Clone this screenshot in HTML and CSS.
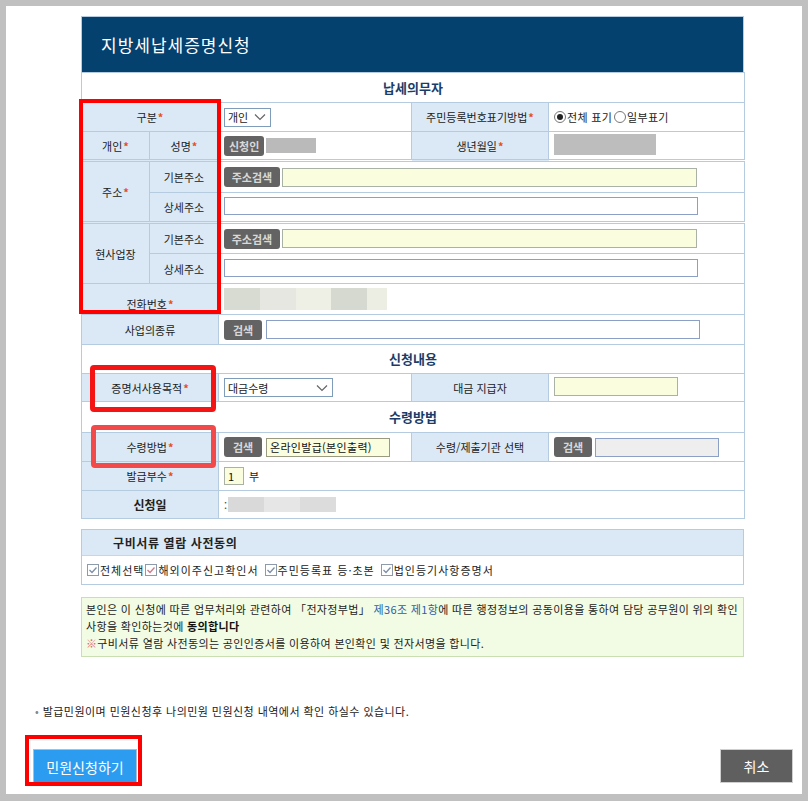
FILE: index.html
```html
<!DOCTYPE html>
<html lang="ko">
<head>
<meta charset="utf-8">
<title>지방세납세증명신청</title>
<link rel="stylesheet" href="styles.css">
</head>
<body>
<div class="page">
  <div class="sheet">
    <div class="content">
      <div class="title-bar">지방세납세증명신청</div>
      <table class="form">
        <colgroup><col class="c1"><col class="c2"><col class="c3"><col class="c4"><col class="c5"></colgroup>
        <tr class="sec h30"><th colspan="5">납세의무자</th></tr>
        <tr class="h29">
          <th colspan="2">구분<span class="req">*</span></th>
          <td><span class="select sel-small">개인<svg class="chev" width="12" height="8" viewBox="0 0 12 8"><path d="M1 1.5l5 5 5-5" fill="none" stroke="#666" stroke-width="1.2"/></svg></span></td>
          <th>주민등록번호표기방법<span class="req">*</span></th>
          <td><span class="radios"><span class="radio on"></span>전체 표기<span class="radio second"></span>일부표기</span></td>
        </tr>
        <tr class="h29">
          <th>개인<span class="req">*</span></th>
          <th>성명<span class="req">*</span></th>
          <td><span class="inline"><span class="btn">신청인</span><span class="blur b-name"></span></span></td>
          <th>생년월일<span class="req">*</span></th>
          <td><span class="blur b-birth"></span></td>
        </tr>
        <tr class="h32 dbl">
          <th rowspan="2">주소<span class="req">*</span></th>
          <th>기본주소</th>
          <td colspan="3"><span class="inline"><span class="btn btn-addr">주소검색</span><span class="input yellow w-addr"></span></span></td>
        </tr>
        <tr class="h30">
          <th>상세주소</th>
          <td colspan="3"><span class="input w-detail"></span></td>
        </tr>
        <tr class="h31 dbl">
          <th rowspan="2">현사업장</th>
          <th>기본주소</th>
          <td colspan="3"><span class="inline"><span class="btn btn-addr">주소검색</span><span class="input yellow w-addr"></span></span></td>
        </tr>
        <tr class="h30">
          <th>상세주소</th>
          <td colspan="3"><span class="input w-detail"></span></td>
        </tr>
        <tr class="h31">
          <th colspan="2" class="low">전화번호<span class="req">*</span></th>
          <td colspan="3"><span class="phone"><span class="p1"></span><span class="p2"></span><span class="p3"></span><span class="p4"></span><span class="p5"></span></span></td>
        </tr>
        <tr class="h30">
          <th colspan="2">사업의종류</th>
          <td colspan="3"><span class="inline gap4"><span class="btn btn-s">검색</span><span class="input w-biz"></span></span></td>
        </tr>
        <tr class="sec h29"><th colspan="5">신청내용</th></tr>
        <tr class="h28">
          <th colspan="2">증명서사용목적<span class="req">*</span></th>
          <td><span class="select sel-wide">대금수령<svg class="chev" width="12" height="8" viewBox="0 0 12 8"><path d="M1 1.5l5 5 5-5" fill="none" stroke="#666" stroke-width="1.2"/></svg></span></td>
          <th>대금 지급자</th>
          <td><span class="input yellow w-124"></span></td>
        </tr>
        <tr class="sec h31"><th colspan="5">수령방법</th></tr>
        <tr class="h29">
          <th colspan="2">수령방법<span class="req">*</span></th>
          <td><span class="inline gap4"><span class="btn btn-s">검색</span><span class="input yellow dark w-124 txt">온라인발급(본인출력)</span></span></td>
          <th>수령/제출기관 선택</th>
          <td><span class="inline gap3"><span class="btn btn-s">검색</span><span class="input grey w-124"></span></span></td>
        </tr>
        <tr class="h29">
          <th colspan="2">발급부수<span class="req">*</span></th>
          <td colspan="3"><span class="inline gap5"><span class="input yellow w-count txt">1</span>부</span></td>
        </tr>
        <tr class="h28">
          <th colspan="2" class="strong">신청일</th>
          <td colspan="3"><span class="date">:<span class="d1"></span><span class="d2"></span><span class="d3"></span></span></td>
        </tr>
      </table>

      <div class="docs">
        <div class="docs-head">구비서류 열람 사전동의</div>
        <div class="docs-body">
          <span class="check"><svg width="12" height="12" viewBox="0 0 12 12"><rect x="0.5" y="0.5" width="11" height="11" fill="#fff" stroke="#8d9aab"/><path d="M2.5 6l2.5 2.5 4.5-5" fill="none" stroke="#7d8fa6" stroke-width="1.3"/></svg>전체선택</span>
          <span class="check"><svg width="12" height="12" viewBox="0 0 12 12"><rect x="0.5" y="0.5" width="11" height="11" fill="#fff" stroke="#8d9aab"/><path d="M2.5 6l2.5 2.5 4.5-5" fill="none" stroke="#d27a86" stroke-width="1.3"/></svg>해외이주신고확인서</span>
          <span class="check"><svg width="12" height="12" viewBox="0 0 12 12"><rect x="0.5" y="0.5" width="11" height="11" fill="#fff" stroke="#8d9aab"/><path d="M2.5 6l2.5 2.5 4.5-5" fill="none" stroke="#7d8fa6" stroke-width="1.3"/></svg>주민등록표 등·초본</span>
          <span class="check"><svg width="12" height="12" viewBox="0 0 12 12"><rect x="0.5" y="0.5" width="11" height="11" fill="#fff" stroke="#8d9aab"/><path d="M2.5 6l2.5 2.5 4.5-5" fill="none" stroke="#7d8fa6" stroke-width="1.3"/></svg>법인등기사항증명서</span>
        </div>
      </div>

      <div class="notice">
        본인은 이 신청에 따른 업무처리와 관련하여 「전자정부법」 <span class="law">제36조 제1항</span>에 따른 행정정보의 공동이용을 통하여 담당 공무원이 위의 확인<br>
        사항을 확인하는것에 <b>동의합니다</b><br>
        <span class="ref">※</span>구비서류 열람 사전동의는 공인인증서를 이용하여 본인확인 및 전자서명을 합니다.
      </div>
    </div>

    <p class="note"><span class="dot">•</span> 발급민원이며 민원신청후 나의민원 민원신청 내역에서 확인 하실수 있습니다.</p>

    <div class="actions">
      <button class="btn-submit" type="button">민원신청하기</button>
      <button class="btn-cancel" type="button">취소</button>
    </div>
  </div>

  <div class="mark mark1"></div>
  <div class="mark mark2"></div>
  <div class="mark mark3"></div>
  <div class="mark mark4"></div>
</div>
</body>
</html>
```

FILE: styles.css
```css
* { box-sizing: border-box; }
html, body { margin: 0; padding: 0; }
body {
  background: #c0c0c0;
  font-family: "Noto Sans CJK KR", "Noto Sans", sans-serif;
  font-size: 11px;
  color: #222;
}
.page {
  position: relative;
  width: 808px;
  height: 801px;
  padding: 6px 6px 7px;
}
.sheet {
  background: #fff;
  height: 788px;
  padding: 10px 0 0 75px;
  display: flex;
  flex-direction: column;
}
.content { width: 663px; }

.title-bar {
  height: 56px;
  background: #05416f;
  border: 1px solid #b5cbe0;
  border-bottom: 0;
  color: #fff;
  font-size: 17px;
  letter-spacing: 1px;
  padding-left: 19px;
  display: flex;
  align-items: center;
}

.form {
  width: 663px;
  border-collapse: collapse;
  table-layout: fixed;
}
.form .c1 { width: 68px; }
.form .c2 { width: 69px; }
.form .c3 { width: 193px; }
.form .c4 { width: 137px; }
.form .c5 { width: 196px; }
.form th, .form td {
  border: 1px solid #b5cbe0;
  padding: 0 0 0 5px;
  line-height: 14px;
  vertical-align: middle;
}
.form th {
  background: #dbe9f6;
  font-weight: normal;
  text-align: center;
  padding: 0;
  color: #222;
}
.form th.strong { font-weight: bold; font-size: 12px; }
.form th.low { vertical-align: bottom; padding-bottom: 3px; }
.form .sec th {
  background: #fff;
  color: #1b3c69;
  font-weight: bold;
  font-size: 13px;
}
.form tr.dbl > * { border-top: 3px double #b5cbe0; }
.h28 { height: 28px; }
.h29 { height: 29px; }
.h30 { height: 30px; }
.h31 { height: 31px; }
.h32 { height: 32px; }

.req { color: #e4501c; font-weight: bold; margin-left: 1px; }

.inline { display: flex; align-items: center; gap: 2px; }
.inline.gap3 { gap: 3px; }
.inline.gap4 { gap: 4px; }
.inline.gap5 { gap: 5px; }

.btn {
  display: inline-flex;
  align-items: center;
  justify-content: center;
  height: 20px;
  padding: 0 5px;
  background: #636363;
  color: #d8d8d8;
  border-radius: 3px;
  font-weight: bold;
  font-size: 11px;
}
.btn-addr { width: 56px; padding: 0; }
.btn-s { width: 38px; padding: 0; }

.input {
  display: inline-flex;
  align-items: center;
  height: 19px;
  background: #fff;
  border: 1px solid #8c9fc4;
  padding-left: 3px;
  font-size: 11px;
}
.input.yellow { background: #fbfddf; border-color: #aab2a6; }
.input.dark { border-color: #9a9a80; letter-spacing: 0.3px; }
.input.grey { background: #eeeeee; border-color: #8c9fc4; }
.w-addr { width: 415px; }
.w-detail { width: 474px; height: 18px; }
.w-biz { width: 434px; }
.w-124 { width: 124px; }
.w-count { width: 20px; height: 18px; }
.txt { color: #111; }

.select {
  display: inline-flex;
  align-items: center;
  justify-content: space-between;
  height: 19px;
  border: 1px solid #7f9db9;
  background: #fff;
  padding: 0 4px 0 3px;
  font-size: 11px;
}
.sel-small { width: 47px; }
.sel-wide { width: 109px; }
.chev { flex: none; }

.radios { display: inline-flex; align-items: center; letter-spacing: 0.3px; }
.radio {
  display: inline-block;
  width: 12px;
  height: 12px;
  border: 1px solid #777;
  border-radius: 50%;
  background: #fff;
  position: relative;
  margin-right: 1px;
}
.radio.second { margin-left: 2px; }
.radio.on::after {
  content: "";
  position: absolute;
  left: 2px; top: 2px;
  width: 6px; height: 6px;
  border-radius: 50%;
  background: #222;
}

.blur { display: inline-block; }
.b-name { width: 50px; height: 15px; background: #bababa; }
.b-birth { width: 102px; height: 21px; background: #bdbdbd; }

.phone { display: flex; height: 22px; width: 163px; }
.phone span { flex: 1; }
.phone .p1 { background: #d8dbd2; }
.phone .p2 { background: #e6e7e0; }
.phone .p3 { background: #eeefe5; }
.phone .p4 { background: #d6d9d0; }
.phone .p5 { background: #eceee4; flex: 0.55; }

.date { display: flex; align-items: center; height: 15px; color: #444; }
.date span { height: 15px; width: 36px; }
.date .d1 { background: #d9d9d9; margin-left: 1px; }
.date .d2 { background: #e6e6e6; }
.date .d3 { background: #dcdcdc; }

.docs {
  margin-top: 10px;
  border: 1px solid #b5cbe0;
}
.docs-head {
  height: 26px;
  background: #dbe9f6;
  font-weight: bold;
  font-size: 12px;
  letter-spacing: 0.6px;
  padding-left: 31px;
  display: flex;
  align-items: center;
  border-bottom: 1px solid #c6d6e6;
}
.docs-body {
  height: 28px;
  display: flex;
  align-items: center;
  padding-left: 5px;
  letter-spacing: 1px;
}
.check { display: inline-flex; align-items: center; gap: 1px; margin-right: 6px; }
.check:nth-child(1) { margin-right: 1px; }
.check svg { flex: none; }

.notice {
  margin-top: 12px;
  background: #f2fce4;
  border: 1px solid #c9dfb1;
  padding: 3px 4px 4px;
  line-height: 17px;
  letter-spacing: 0.35px;
  white-space: nowrap;
  color: #222;
}
.notice .law { color: #2b5fa9; }
.notice b { color: #111; }
.notice .ref { color: #e06a6a; }

.note {
  margin: 47px 0 0 -46px;
  font-size: 11px;
  letter-spacing: 0.45px;
  line-height: 14px;
  color: #222;
}
.note .dot { color: #888; }

.actions {
  margin: 31px 0 0 -48px;
  display: flex;
  justify-content: space-between;
  width: 760px;
}
.btn-submit, .btn-cancel {
  font-family: "Noto Sans CJK KR", "Noto Sans", sans-serif;
  cursor: pointer;
}
.btn-submit {
  width: 104px;
  height: 35px;
  background: #2c9cf0;
  color: #fff;
  border: 1px solid #a9bfd2;
  font-size: 14px;
  padding: 0;
}
.btn-cancel {
  width: 73px;
  height: 34px;
  background: #5f5f5f;
  color: #fff;
  border: 1px solid #cfcfcf;
  font-size: 14px;
  padding: 0;
}

.mark {
  position: absolute;
  border: 4px solid #ff0000;
  pointer-events: none;
}
.mark1 { left: 79px; top: 99px; width: 142px; height: 215px; }
.mark2 { left: 90px; top: 365px; width: 126px; height: 47px; border-width: 5px; border-radius: 4px; border-color: #f41414; }
.mark3 { left: 91px; top: 425px; width: 125px; height: 43px; border-width: 5px; border-radius: 4px; border-color: #f24a4a; }
.mark4 { left: 25px; top: 735px; width: 117px; height: 51px; }
```
